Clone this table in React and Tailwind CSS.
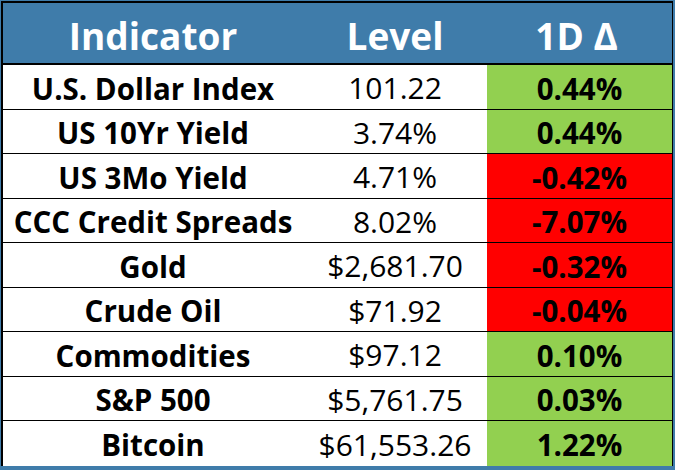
import React from "react";

const rows = [
  { name: "U.S. Dollar Index", level: "101.22", change: "0.44%", up: true },
  { name: "US 10Yr Yield", level: "3.74%", change: "0.44%", up: true },
  { name: "US 3Mo Yield", level: "4.71%", change: "-0.42%", up: false },
  { name: "CCC Credit Spreads", level: "8.02%", change: "-7.07%", up: false },
  { name: "Gold", level: "$2,681.70", change: "-0.32%", up: false },
  { name: "Crude Oil", level: "$71.92", change: "-0.04%", up: false },
  { name: "Commodities", level: "$97.12", change: "0.10%", up: true },
  { name: "S&P 500", level: "$5,761.75", change: "0.03%", up: true },
  { name: "Bitcoin", level: "$61,553.26", change: "1.22%", up: true },
];

export default function App() {
  return (
    <div
      className="w-[675px] h-[470px] bg-[#3f7caa] pt-px pl-px overflow-hidden"
      style={{ fontFamily: '"Open Sans", "Noto Sans", sans-serif' }}
    >
      <div className="w-[672px] border-l-2 border-t-2 border-r border-black bg-white">
        {/* header */}
        <div className="grid grid-cols-[300px_184px_185px] h-[62px] bg-[#3f7caa] border-b-2 border-black text-white font-bold text-[37px] leading-none">
          <div className="flex items-center justify-center pt-[4px]">Indicator</div>
          <div className="flex items-center justify-center pt-[4px]">Level</div>
          <div className="flex items-center justify-center pt-[4px] pr-[6px]">1D Δ</div>
        </div>

        {rows.map((r, i) => (
          <div
            key={r.name}
            className={
              "grid grid-cols-[300px_184px_185px] h-[44.5px] text-black text-[29.5px] leading-none " +
              (i < rows.length - 1 ? "border-b border-black" : "")
            }
          >
            <div className="flex items-center justify-center font-bold pt-[3px]">{r.name}</div>
            <div className="flex items-center justify-center pt-[3px] text-[30px]">{r.level}</div>
            <div
              className={
                "flex items-center justify-center font-bold pt-[3px] " +
                (r.up ? "bg-[#92d050]" : "bg-[#ff0000]")
              }
            >
              {r.change}
            </div>
          </div>
        ))}
      </div>
    </div>
  );
}
